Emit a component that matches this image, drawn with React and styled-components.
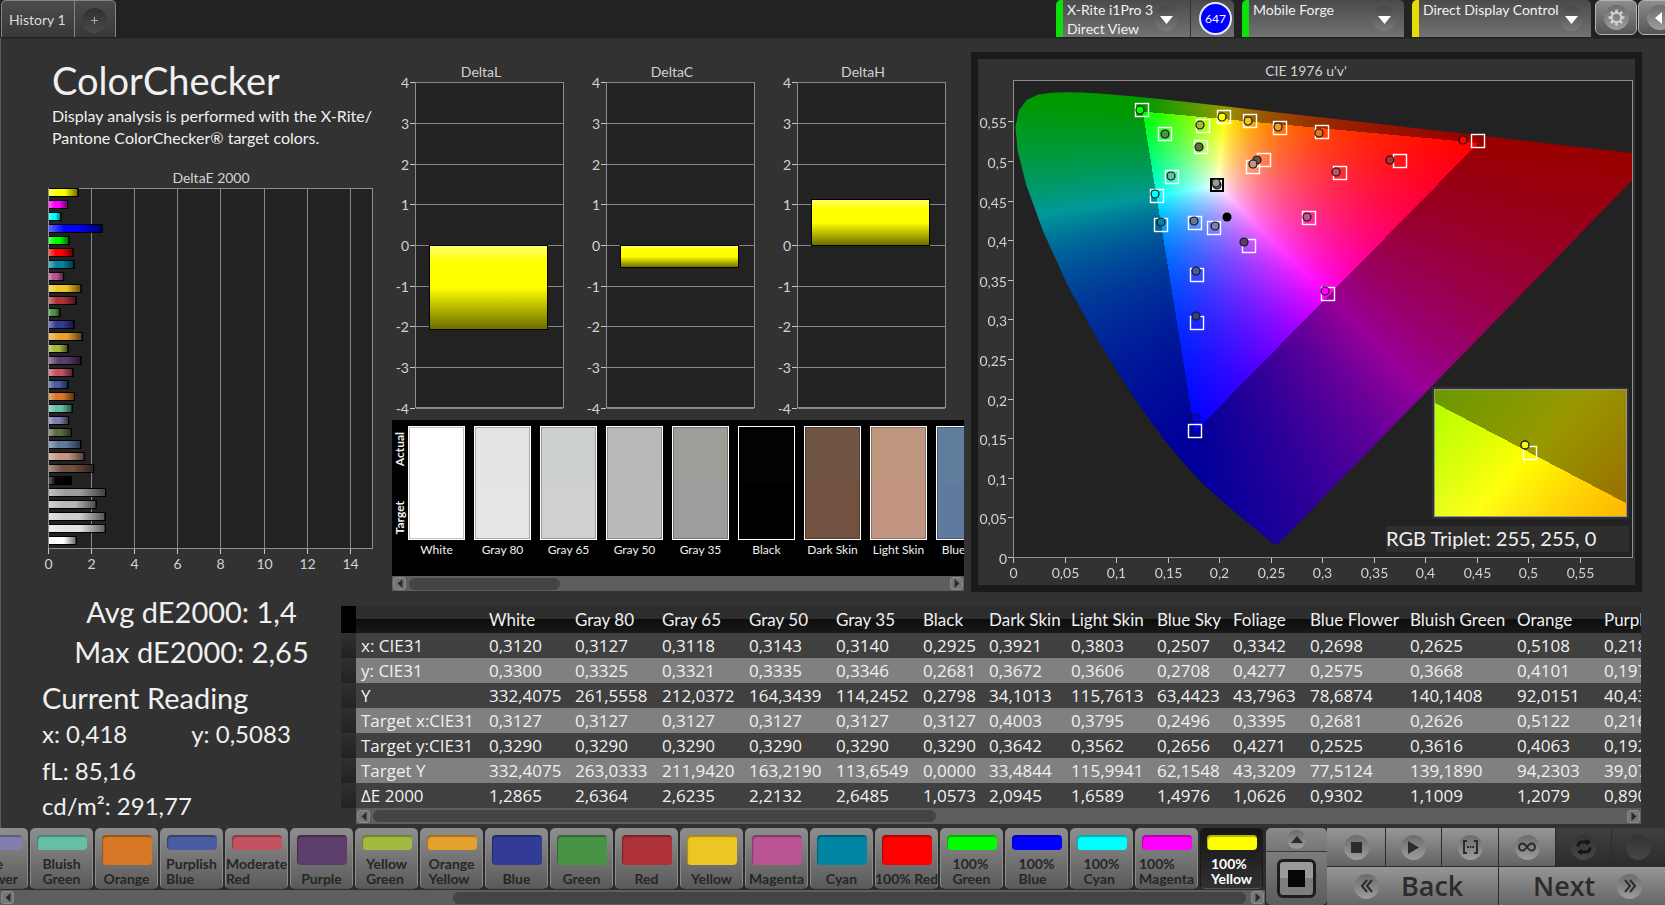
import React, { useEffect, useRef } from "react";
import styled, { createGlobalStyle, css } from "styled-components";

const UI = '"Lato", "Liberation Sans", sans-serif';
const GRID_FONT = '"Open Sans", "Noto Sans", sans-serif';

const GlobalStyle = createGlobalStyle`
  *, *::before, *::after { box-sizing: border-box; }
  body { margin: 0; background: #323232; color: #f0f0f0; font-family: ${UI}; }
  button, select { font-family: inherit; margin: 0; }
  button { padding: 0; border: 0; cursor: pointer; }
`;

/* ---------- data ---------- */

const COLORS = {
  white: "#ffffff", gray80: "#e4e4e4", gray65: "#cfcfcf", gray50: "#b8b8b8", gray35: "#9c9c9c",
  black: "#050505", darkSkin: "#73513f", lightSkin: "#c39583", blueSky: "#5e7b9d", foliage: "#5a6d42",
  blueFlower: "#827fb0", bluishGreen: "#66bea7", orange: "#d87725", purplishBlue: "#4a5ca2",
  moderateRed: "#c45361", purple: "#5d3d6c", yellowGreen: "#9fba3f", orangeYellow: "#e6a12c",
  blue: "#323b95", green: "#489345", red: "#ae3038", yellow: "#ecc622", magenta: "#b95392",
  cyan: "#0086a4", red100: "#ff0000", green100: "#00ff00", blue100: "#0000ff", cyan100: "#00ffff",
  magenta100: "#ff00ff", yellow100: "#ffff00",
};

const DELTA_E = [
  ["yellow100", 1.37], ["magenta100", 0.89], ["cyan100", 0.58], ["blue100", 2.48], ["green100", 0.95],
  ["red100", 1.14], ["cyan", 1.18], ["magenta", 0.7], ["yellow", 1.51], ["red", 1.28], ["green", 0.53],
  ["blue", 1.18], ["orangeYellow", 1.56], ["yellowGreen", 0.9], ["purple", 1.5], ["moderateRed", 1.13],
  ["purplishBlue", 0.9], ["orange", 1.2079], ["bluishGreen", 1.1009], ["blueFlower", 0.9302],
  ["foliage", 1.0626], ["blueSky", 1.4976], ["lightSkin", 1.6589], ["darkSkin", 2.0945],
  ["black", 1.0573], ["gray35", 2.6485], ["gray50", 2.2132], ["gray65", 2.6235], ["gray80", 2.6364],
  ["white", 1.2865],
];

const SWATCHES = [
  ["White", "#ffffff", "#ffffff"], ["Gray 80", "#e3e5e2", "#e5e5e5"], ["Gray 65", "#cdd1cd", "#d0d0d0"],
  ["Gray 50", "#b9b9b8", "#bababa"], ["Gray 35", "#9c9e98", "#9e9d9e"], ["Black", "#020205", "#000000"],
  ["Dark Skin", "#6f5443", "#725140"], ["Light Skin", "#bf977e", "#c29482"], ["Blue Sky", "#5f7d9c", "#5f7a9d"],
];

const COLUMNS = [
  ["White", 86, "0,3120", "0,3300", "332,4075", "0,3127", "0,3290", "332,4075", "1,2865"],
  ["Gray 80", 87, "0,3127", "0,3325", "261,5558", "0,3127", "0,3290", "263,0333", "2,6364"],
  ["Gray 65", 87, "0,3118", "0,3321", "212,0372", "0,3127", "0,3290", "211,9420", "2,6235"],
  ["Gray 50", 87, "0,3143", "0,3335", "164,3439", "0,3127", "0,3290", "163,2190", "2,2132"],
  ["Gray 35", 87, "0,3140", "0,3346", "114,2452", "0,3127", "0,3290", "113,6549", "2,6485"],
  ["Black", 66, "0,2925", "0,2681", "0,2798", "0,3127", "0,3290", "0,0000", "1,0573"],
  ["Dark Skin", 82, "0,3921", "0,3672", "34,1013", "0,4003", "0,3642", "33,4844", "2,0945"],
  ["Light Skin", 86, "0,3803", "0,3606", "115,7613", "0,3795", "0,3562", "115,9941", "1,6589"],
  ["Blue Sky", 76, "0,2507", "0,2708", "63,4423", "0,2496", "0,2656", "62,1548", "1,4976"],
  ["Foliage", 77, "0,3342", "0,4277", "43,7963", "0,3395", "0,4271", "43,3209", "1,0626"],
  ["Blue Flower", 100, "0,2698", "0,2575", "78,6874", "0,2681", "0,2525", "77,5124", "0,9302"],
  ["Bluish Green", 107, "0,2625", "0,3668", "140,1408", "0,2626", "0,3616", "139,1890", "1,1009"],
  ["Orange", 87, "0,5108", "0,4101", "92,0151", "0,5122", "0,4063", "94,2303", "1,2079"],
  ["Purplish Blue", 110, "0,2181", "0,1974", "40,4312", "0,2161", "0,1929", "39,0712", "0,8901"],
];
const ROW_NAMES = ["x: CIE31", "y: CIE31", "Y", "Target x:CIE31", "Target y:CIE31", "Target Y", "ΔE 2000"];

const PATCHES = [
  [["Blue", "Flower"], "blueFlower"], [["Bluish", "Green"], "bluishGreen"], [["Orange"], "orange"],
  [["Purplish", "Blue"], "purplishBlue"], [["Moderate", "Red"], "moderateRed"], [["Purple"], "purple"],
  [["Yellow", "Green"], "yellowGreen"], [["Orange", "Yellow"], "orangeYellow"], [["Blue"], "blue"],
  [["Green"], "green"], [["Red"], "red"], [["Yellow"], "yellow"], [["Magenta"], "magenta"],
  [["Cyan"], "cyan"], [["100% Red"], "red100"], [["100%", "Green"], "green100"],
  [["100%", "Blue"], "blue100"], [["100%", "Cyan"], "cyan100"], [["100%", "Magenta"], "magenta100"],
  [["100%", "Yellow"], "yellow100"],
];

/* target x, target y, measured x, measured y (plot units), fill */
const MARKERS = [
  [128, 29, 126, 29, "green100"], [210, 36, 208, 36, "yellow100"], [236, 40, 234, 40, "yellow"],
  [266, 47, 264, 46, "orangeYellow"], [308, 51, 305, 52, "orange"], [464, 60, 449, 59, "red100"],
  [189, 45, 186, 44, "yellowGreen"], [151, 53, 151, 53, "green"], [187, 66, 185, 66, "foliage"],
  [250, 79, 243, 79, "darkSkin"], [239, 86, 239, 83, "lightSkin"], [158, 96, 157, 95, "bluishGreen"],
  [143, 115, 141, 113, "cyan100"], [147, 144, 147, 141, "cyan"], [181, 142, 180, 140, "blueSky"],
  [200, 147, 201, 145, "blueFlower"], [235, 165, 230, 161, "purple"], [326, 92, 322, 91, "moderateRed"],
  [386, 80, 376, 79, "red"], [295, 137, 293, 136, "magenta"], [183, 194, 182, 190, "purplishBlue"],
  [314, 213, 311, 210, "magenta100"], [183, 242, 182, 235, "blue"], [181, 350, 182, 337, "blue100"],
];

const LOCUS = [
  [0.1741, 0.005], [0.1733, 0.0048], [0.1714, 0.0051], [0.1689, 0.0069], [0.1644, 0.0109], [0.1566, 0.0177],
  [0.144, 0.0297], [0.1355, 0.0399], [0.1241, 0.0578], [0.1096, 0.0868], [0.0913, 0.1327], [0.0687, 0.2007],
  [0.0454, 0.295], [0.0235, 0.4127], [0.0082, 0.5384], [0.0039, 0.6548], [0.0139, 0.7502], [0.0389, 0.812],
  [0.0743, 0.8338], [0.1142, 0.8262], [0.1547, 0.8059], [0.1929, 0.7816], [0.2296, 0.7543], [0.3016, 0.6923],
  [0.3731, 0.6245], [0.4441, 0.5547], [0.5125, 0.4866], [0.5752, 0.4242], [0.627, 0.3725], [0.6658, 0.334],
  [0.6915, 0.3083], [0.719, 0.2809], [0.7347, 0.2653],
];

/* ---------- chromaticity painting ---------- */

const xyToUv = ([x, y]) => {
  const d = -2 * x + 12 * y + 3;
  return [(4 * x) / d, (9 * y) / d];
};
const uvToXy = (u, v) => {
  const d = 6 * u - 16 * v + 12;
  return [(9 * u) / d, (4 * v) / d];
};

function xyToRgb(x, y) {
  const X = x / y;
  const Z = (1 - x - y) / y;
  const r = 3.2406 * X - 1.5372 - 0.4986 * Z;
  const g = -0.9689 * X + 1.8758 + 0.0415 * Z;
  const b = 0.0557 * X - 0.204 + 1.057 * Z;
  const k = (Math.min(r, g, b) < 0 ? 153 : 255) / Math.max(r, g, b);
  return [r, g, b].map((c) => Math.max(0, c) * k);
}

function Chromaticity({ width, height, toXy, outline }) {
  const ref = useRef(null);
  useEffect(() => {
    const ctx = ref.current.getContext("2d");
    const layer = document.createElement("canvas");
    layer.width = width;
    layer.height = height;
    const lctx = layer.getContext("2d");
    const image = lctx.createImageData(width, height);
    for (let py = 0; py < height; py++) {
      for (let px = 0; px < width; px++) {
        const [x, y] = toXy(px + 0.5, py + 0.5);
        const [r, g, b] = xyToRgb(x, Math.max(y, 0.0001));
        image.data.set([r, g, b, 255], (py * width + px) * 4);
      }
    }
    lctx.putImageData(image, 0, 0);
    ctx.clearRect(0, 0, width, height);
    ctx.save();
    if (outline) {
      ctx.beginPath();
      outline.forEach(([px, py]) => ctx.lineTo(px, py));
      ctx.closePath();
      ctx.clip();
    }
    ctx.drawImage(layer, 0, 0);
    ctx.restore();
  }, [width, height, toXy, outline]);
  return <Canvas ref={ref} width={width} height={height} />;
}

const Canvas = styled.canvas`
  display: block;
`;

const PLOT = { x: 36, y: 22, w: 618, h: 476, scaleX: 1030, scaleY: 792 };
const plotToXy = (px, py) => uvToXy(px / PLOT.scaleX, (PLOT.h - py) / PLOT.scaleY);
const LOCUS_OUTLINE = LOCUS.map(xyToUv).map(([u, v]) => [u * PLOT.scaleX, PLOT.h - v * PLOT.scaleY]);
const INSET = { x: 457, y: 331, w: 191, h: 126 };
const insetToXy = (px, py) => [
  0.4193 + (px / INSET.w - 0.5) * 0.05,
  0.5053 - (py / INSET.h - 0.5) * 0.05,
];

/* ---------- chart primitives ---------- */

const Chart = styled.svg`
  display: block;
  width: 100%;
  height: auto;
  font-family: ${UI};
  font-size: 14px;
  fill: #d2d2d2;
`;
const PlotArea = styled.rect`
  fill: ${(p) => p.$fill || "#222222"};
  stroke: #8e8e8e;
`;
const GridLine = styled.line`
  stroke: ${(p) => (p.$tick ? "#c8c8c8" : "#868686")};
`;
const BarRect = styled.rect`
  stroke: #000;
`;

function DeltaEChart() {
  const unit = 21.55;
  return (
    <Chart viewBox="0 0 392 424" role="img" aria-label="DeltaE 2000">
      <defs>
        <linearGradient id="barShade">
          <stop offset="0" stopColor="#fff" stopOpacity="0.4" />
          <stop offset="0.3" stopColor="#fff" stopOpacity="0" />
          <stop offset="0.55" stopColor="#000" stopOpacity="0" />
          <stop offset="1" stopColor="#000" stopOpacity="0.6" />
        </linearGradient>
      </defs>
      <text x="211" y="15" textAnchor="middle">DeltaE 2000</text>
      <PlotArea x="48.5" y="20.5" width="324" height="360" />
      {[0, 2, 4, 6, 8, 10, 12, 14].map((v) => {
        const x = Math.round(48 + v * unit) + 0.5;
        return (
          <g key={v}>
            <GridLine x1={x} x2={x} y1="21" y2="380" />
            <GridLine $tick x1={x} x2={x} y1="381" y2="386" />
            <text x={x} y="401" textAnchor="middle">{v}</text>
          </g>
        );
      })}
      {DELTA_E.map(([name, value], i) => {
        const box = { x: 48.5, y: 20.5 + i * 12, width: value * unit, height: 8 };
        return (
          <g key={name}>
            <BarRect {...box} fill={COLORS[name]} />
            <BarRect {...box} fill="url(#barShade)" />
          </g>
        );
      })}
      <line x1="48.5" x2="48.5" y1="20" y2="381" stroke="#8e8e8e" />
    </Chart>
  );
}

function DeltaChart({ title, value }) {
  const unit = 40.7;
  const zero = 185;
  const top = value > 0 ? zero - value * unit : zero;
  return (
    <Chart viewBox="0 0 191 360" role="img" aria-label={title}>
      <defs>
        <linearGradient id={`shade${title}`} x1="0" y1="0" x2="0" y2="1">
          <stop offset="0" stopColor="#ffff70" />
          <stop offset="0.2" stopColor="#ffff00" />
          <stop offset="0.5" stopColor="#ffff00" />
          <stop offset="1" stopColor="#6a6a00" />
        </linearGradient>
      </defs>
      <text x="89" y="17" textAnchor="middle">{title}</text>
      <PlotArea x="23.5" y="22.5" width="148" height="325" />
      {[4, 3, 2, 1, 0, -1, -2, -3, -4].map((v) => {
        const y = Math.round(zero - v * unit) + 0.5;
        return (
          <g key={v}>
            <GridLine x1="24" x2="171" y1={y} y2={y} />
            <GridLine $tick x1="18" x2="23" y1={y} y2={y} />
            <text x="17" y={y + 5} textAnchor="end">{v}</text>
          </g>
        );
      })}
      <BarRect x="37.5" y={Math.round(top) + 0.5} width="118" height={Math.round(Math.abs(value) * unit)} fill={`url(#shade${title})`} />
    </Chart>
  );
}

const axisLabel = (i) => String(Math.round(i * 5) / 100).replace(".", ",");

function CieChart() {
  const ticks = Array.from({ length: 12 }, (_, i) => i);
  const base = PLOT.y + PLOT.h;
  return (
    <Chart viewBox="0 0 657 526" role="img" aria-label="CIE 1976 u'v' chromaticity diagram">
      <text x="328" y="17" textAnchor="middle">CIE 1976 u'v'</text>
      <PlotArea x="35.5" y="21.5" width="619" height="477" />
      <foreignObject x={PLOT.x} y={PLOT.y} width={PLOT.w} height={PLOT.h}>
        <Chromaticity width={PLOT.w} height={PLOT.h} toXy={plotToXy} outline={LOCUS_OUTLINE} />
      </foreignObject>
      {ticks.map((i) => {
        const x = Math.round(PLOT.x + i * 51.5) - 0.5;
        const y = Math.round(base - i * 39.6) + 0.5;
        return (
          <g key={i}>
            <GridLine $tick x1={x} x2={x} y1={base + 1} y2={base + 6} />
            <text x={x} y={base + 21} textAnchor="middle">{axisLabel(i)}</text>
            <GridLine $tick x1="30" x2="35" y1={y} y2={y} />
            <text x="29" y={y + 6} textAnchor="end">{axisLabel(i)}</text>
          </g>
        );
      })}
      <g transform={`translate(${PLOT.x} ${PLOT.y})`}>
        {MARKERS.map(([tx, ty]) => (
          <rect key={`${tx}-${ty}`} x={tx - 6.5} y={ty - 6.5} width="13" height="13" fill="none" stroke="#fff" strokeWidth="1.4" />
        ))}
        <rect x="197" y="98" width="12" height="12" fill="none" stroke="#000" strokeWidth="2" />
        <rect x="199" y="100" width="8" height="8" fill="none" stroke="#fff" strokeWidth="1.5" />
        <circle cx="203" cy="104" r="4" fill="#777" stroke="#111" strokeWidth="1.2" />
        <circle cx="202" cy="102" r="4" fill="#9a9a9a" stroke="#111" strokeWidth="1.2" />
        {MARKERS.map(([, , mx, my, name]) => (
          <circle key={name} cx={mx} cy={my} r="4" fill={COLORS[name]} stroke="#141414" strokeWidth="1.2" />
        ))}
        <circle cx="213" cy="136" r="4.5" fill="#000" />
      </g>
      <rect x={INSET.x - 3} y={INSET.y - 3} width={INSET.w + 6} height={INSET.h + 6} fill="#303030" />
      <foreignObject x={INSET.x} y={INSET.y} width={INSET.w} height={INSET.h}>
        <Chromaticity width={INSET.w} height={INSET.h} toXy={insetToXy} />
      </foreignObject>
      <rect x={INSET.x - 0.5} y={INSET.y - 0.5} width={INSET.w + 1} height={INSET.h + 1} fill="none" stroke="#969696" />
      <rect x="545.5" y="387.5" width="13" height="13" fill="none" stroke="#fff" strokeWidth="1.4" />
      <circle cx="547" cy="386" r="4" fill="#ffff00" stroke="#222" strokeWidth="1.4" />
      <rect x="408" y="467" width="243" height="26" fill="#2e2e2e" />
      <text x="408" y="487" fontSize="20" fill="#f0f0f0">RGB Triplet: 255, 255, 0</text>
    </Chart>
  );
}

/* ---------- scroll bar ---------- */

const Track = styled.div`
  display: flex;
  align-items: center;
  gap: 3px;
  height: ${(p) => p.$height}px;
  padding: 0 1px;
  background: #5e5e5e;
`;
const ArrowButton = styled.button`
  flex: none;
  display: grid;
  place-items: center;
  width: 13px;
  height: 13px;
  border: 1px solid #8b8b8b;
  border-radius: 3px;
  background: #777777;
`;
const Rail = styled.div`
  flex: 1;
  display: flex;
  height: 12px;
`;
const Thumb = styled.div`
  border-radius: 6px;
  background: #444444;
`;

function ScrollBar({ start, size, height = 15, label }) {
  return (
    <Track $height={height}>
      <ArrowButton aria-label={`${label} left`}>
        <svg width="6" height="9" viewBox="0 0 6 9"><path d="M5.5 0v9L0.5 4.5z" fill="#2b2b2b" /></svg>
      </ArrowButton>
      <Rail>
        <Thumb style={{ marginLeft: `${start}%`, width: `${size}%` }} />
      </Rail>
      <ArrowButton aria-label={`${label} right`}>
        <svg width="6" height="9" viewBox="0 0 6 9"><path d="M0.5 0v9l5-4.5z" fill="#2b2b2b" /></svg>
      </ArrowButton>
    </Track>
  );
}

/* ---------- top bar ---------- */

const Page = styled.div`
  display: flex;
  flex-direction: column;
  min-height: 100vh;
  overflow: hidden;
`;
const TopBar = styled.header`
  display: flex;
  justify-content: space-between;
  height: 38px;
  background: #222222;
`;
const Tabs = styled.nav`
  display: flex;
  height: 37px;
  margin-left: 1px;
  border: 1px solid #858585;
  border-bottom: 0;
  border-radius: 5px 5px 0 0;
  background: linear-gradient(#4c4c4c, #383838);
`;
const Tab = styled.button`
  padding: 1px 8px 0 7px;
  background: none;
  color: #dcdcdc;
  font-size: 14px;
`;
const AddTab = styled.button`
  display: grid;
  place-items: center;
  width: 41px;
  padding-top: 3px;
  border-left: 1px solid #858585;
  background: none;
`;
const AddDisc = styled.span`
  display: grid;
  place-items: center;
  width: 25px;
  height: 25px;
  border-radius: 50%;
  background: linear-gradient(#2f2f2f, #4a4a4a);
`;
const Devices = styled.div`
  display: flex;
  gap: 8px;
`;
const Device = styled.div`
  display: flex;
  width: ${(p) => p.$width}px;
  height: 37px;
  border-left: 7px solid ${(p) => p.$accent};
  border-radius: 5px 5px 0 0;
  background: linear-gradient(#4a4a4a, #727272);
`;
const DeviceBody = styled.div`
  position: relative;
  flex: 1;
  min-width: 0;
`;
const DeviceSelect = styled.select`
  appearance: none;
  display: block;
  width: 100%;
  height: 19px;
  padding: 0 0 0 4px;
  border: 0;
  background: transparent;
  color: #f2f2f2;
  font-size: 14px;
`;
const DeviceMode = styled.span`
  display: block;
  padding-left: 4px;
  color: #f2f2f2;
  font-size: 14px;
  line-height: 19px;
`;
const Caret = styled.span`
  position: absolute;
  top: 6px;
  right: 8px;
  display: grid;
  place-items: center;
  width: 24px;
  height: 25px;
  padding-top: 3px;
  border-radius: 50%;
  background: linear-gradient(#484848, #7a7a7a);
  pointer-events: none;
`;
const Meter = styled.div`
  display: grid;
  place-items: center;
  width: 44px;
  margin-left: 4px;
  border-left: 1px solid #333;
  padding-left: 6px;
`;
const MeterValue = styled.span`
  display: grid;
  place-items: center;
  width: 33px;
  height: 33px;
  border: 2px solid #e8e8ff;
  border-radius: 50%;
  background: #0000ff;
  color: #fff;
  font-size: 12px;
`;
const SystemButtons = styled.div`
  display: flex;
  width: 70px;
  margin-left: -4px;
  overflow: hidden;
`;
const SystemButton = styled.button`
  flex: none;
  display: grid;
  place-items: center;
  width: 42px;
  height: 35px;
  margin-right: 1px;
  border: 1px solid #b4b4b4;
  border-radius: 6px;
  background: linear-gradient(#8d8d8d, #555555);
`;
const Disc = styled.span`
  display: grid;
  place-items: center;
  width: ${(p) => p.$size || 25}px;
  height: ${(p) => p.$size || 25}px;
  border-radius: 50%;
  background: ${(p) => (p.$dark ? "linear-gradient(#333, #474747)" : "linear-gradient(#6b6b6b, #9d9d9d)")};
`;

function DownCaret() {
  return (
    <Caret>
      <svg width="13" height="8" viewBox="0 0 13 8"><path d="M0 0h13L6.5 8z" fill="#fff" /></svg>
    </Caret>
  );
}

function Header() {
  return (
    <TopBar>
      <Tabs>
        <Tab>History 1</Tab>
        <AddTab aria-label="Add tab">
          <AddDisc>
            <svg width="9" height="9" viewBox="0 0 9 9"><path d="M4.5 1v7M1 4.5h7" stroke="#aaa" /></svg>
          </AddDisc>
        </AddTab>
      </Tabs>
      <Devices>
        <Device $width={178} $accent="#0be00b">
          <DeviceBody>
            <DeviceSelect aria-label="Meter"><option>X-Rite i1Pro 3</option></DeviceSelect>
            <DeviceMode>Direct View</DeviceMode>
            <DownCaret />
          </DeviceBody>
          <Meter><MeterValue>647</MeterValue></Meter>
        </Device>
        <Device $width={162} $accent="#0be00b">
          <DeviceBody>
            <DeviceSelect aria-label="Source"><option>Mobile Forge</option></DeviceSelect>
            <DownCaret />
          </DeviceBody>
        </Device>
        <Device $width={179} $accent="#e6dc0a">
          <DeviceBody>
            <DeviceSelect aria-label="Display"><option>Direct Display Control</option></DeviceSelect>
            <DownCaret />
          </DeviceBody>
        </Device>
        <SystemButtons>
          <SystemButton aria-label="Settings">
            <Disc>
              <svg width="17" height="17" viewBox="-9 -9 18 18">
                {Array.from({ length: 8 }, (_, i) => (
                  <rect key={i} x="-1.4" y="-8.4" width="2.8" height="4" fill="#d2d2d2" transform={`rotate(${i * 45})`} />
                ))}
                <circle r="5" fill="none" stroke="#d2d2d2" strokeWidth="2" />
              </svg>
            </Disc>
          </SystemButton>
          <SystemButton aria-label="Collapse panel">
            <Disc>
              <svg width="8" height="12" viewBox="0 0 8 12"><path d="M7 0v12L0 6z" fill="#fff" /></svg>
            </Disc>
          </SystemButton>
        </SystemButtons>
      </Devices>
    </TopBar>
  );
}

/* ---------- main area ---------- */

const Workspace = styled.main`
  flex: 1;
  box-shadow: inset 1px 0 0 #5c5c5c, inset 0 1px 0 #2a2a2a;
`;
const Panels = styled.section`
  display: grid;
  grid-template-columns: minmax(0, 392fr) minmax(0, 573fr) minmax(0, 700fr);
`;
const Intro = styled.div`
  height: 130px;
  padding: 20px 0 0 52px;
  white-space: nowrap;
`;
const Title = styled.h1`
  margin: 0;
  font-size: 38px;
  font-weight: 400;
  line-height: 44px;
`;
const Description = styled.p`
  margin: 3px 0 0;
  font-size: 16px;
  line-height: 22px;
`;
const Middle = styled.div`
  padding-top: 22px;
`;
const DeltaCharts = styled.div`
  display: grid;
  grid-template-columns: repeat(3, minmax(0, 1fr));
`;
const SwatchPanel = styled.div`
  margin-right: 1px;
  background: #000;
`;
const SwatchStrip = styled.div`
  display: flex;
  height: 156px;
  padding-top: 6px;
  overflow: hidden;
`;
const SideLabels = styled.div`
  flex: none;
  display: flex;
  flex-direction: column-reverse;
  justify-content: space-between;
  width: 16px;
  height: 114px;
  padding: 6px 0;
  font-size: 12px;
  font-weight: 700;
`;
const SideLabel = styled.span`
  writing-mode: vertical-rl;
  transform: rotate(180deg);
  line-height: 16px;
`;
const Swatch = styled.figure`
  flex: none;
  width: 57px;
  margin: 0 9px 0 0;
`;
const SwatchColor = styled.div`
  height: 114px;
  border: 1px solid #fff;
  outline: 1px solid rgba(0, 0, 0, 0.25);
  outline-offset: -2px;
  background: linear-gradient(${(p) => p.$actual} 50%, ${(p) => p.$target} 50%);
`;
const SwatchName = styled.figcaption`
  font-size: 12px;
  line-height: 20px;
  text-align: center;
  white-space: nowrap;
`;
const CiePanel = styled.div`
  margin: 14px 23px 0 6px;
  border: 7px solid #1a1a1a;
`;

const Results = styled.section`
  display: flex;
  padding-right: 24px;
`;
const Stats = styled.div`
  flex: none;
  width: 341px;
  padding-left: 42px;
  white-space: nowrap;
`;
const Summary = styled.p`
  width: 299px;
  margin: 0;
  font-size: 29px;
  line-height: 40px;
  text-align: center;
`;
const ReadingTitle = styled.h2`
  margin: 4px 0 0;
  font-size: 29px;
  font-weight: 400;
  line-height: 44px;
`;
const Reading = styled.p`
  display: flex;
  gap: 64px;
  margin: 0;
  font-size: 24px;
  line-height: ${(p) => p.$line}px;
`;
const TableArea = styled.div`
  flex: 1;
  min-width: 0;
  padding: 14px 0 4px;
`;
const TableClip = styled.div`
  overflow: hidden;
`;
const Table = styled.table`
  table-layout: fixed;
  width: 1368px;
  border-collapse: collapse;
  font-size: 17px;
  line-height: 25px;
  white-space: nowrap;
  text-align: left;
`;
const HeadRow = styled.tr`
  height: 27px;
  background: linear-gradient(#2c2c2c 0, #2e2e2e 46%, #0d0d0d 50%, #191919 100%);
`;
const BodyRow = styled.tr`
  height: 25px;
  background: ${(p) => (p.$light ? "#808080" : "#404040")};
  font-family: ${GRID_FONT};
`;
const cell = css`
  padding: 0 0 0 5px;
  font-weight: 400;
`;
const HeadCell = styled.th`${cell}`;
const Cell = styled.td`${cell}`;
const Selector = styled.td`
  padding: 0;
  background: ${(p) => (p.$head ? "#000" : "linear-gradient(#303030, #222222)")};
`;
const TableScroll = styled.div`
  margin-left: 15px;
`;

function DataTable() {
  return (
    <TableArea>
      <TableClip>
        <Table>
          <colgroup>
            <col style={{ width: 15 }} />
            <col style={{ width: 128 }} />
            {COLUMNS.map(([name, width]) => <col key={name} style={{ width }} />)}
          </colgroup>
          <thead>
            <HeadRow>
              <Selector $head />
              <Cell />
              {COLUMNS.map(([name]) => <HeadCell key={name} scope="col">{name}</HeadCell>)}
            </HeadRow>
          </thead>
          <tbody>
            {ROW_NAMES.map((rowName, r) => (
              <BodyRow key={rowName} $light={r % 2 === 1}>
                <Selector />
                <HeadCell scope="row">{rowName}</HeadCell>
                {COLUMNS.map((column) => <Cell key={column[0]}>{column[r + 2]}</Cell>)}
              </BodyRow>
            ))}
          </tbody>
        </Table>
      </TableClip>
      <TableScroll><ScrollBar start={0} size={45} height={16} label="Scroll table" /></TableScroll>
    </TableArea>
  );
}

/* ---------- footer ---------- */

const Footer = styled.footer`
  display: flex;
  height: 77px;
  background: #2c2c2c;
`;
const PatchArea = styled.div`
  flex: 1;
  min-width: 0;
  margin-right: 1px;
`;
const PatchRow = styled.div`
  display: flex;
  justify-content: flex-end;
  gap: 2px;
  height: 62px;
  padding-right: 2px;
  overflow: hidden;
`;
const PatchButton = styled.button`
  flex: none;
  display: flex;
  flex-direction: column;
  align-items: center;
  justify-content: space-between;
  width: 63px;
  height: 61px;
  padding: 6px 0 2px;
  border: 1px solid ${(p) => (p.$active ? "#1a1a1a" : "#8a8a8a")};
  border-bottom-color: #555;
  border-radius: 5px;
  background: ${(p) => (p.$active ? "linear-gradient(#161616, #303030)" : "linear-gradient(#8e8e8e, #5a5a5a)")};
  color: ${(p) => (p.$active ? "#fff" : "#262626")};
  font-size: 14px;
  font-weight: 700;
  line-height: 15px;
  text-align: left;
  white-space: nowrap;
`;
const PatchColor = styled.span`
  width: 50px;
  height: ${(p) => (p.$tall ? 30 : 15)}px;
  border-radius: 4px;
  background: ${(p) => p.$color};
  box-shadow: inset 1px 2px 1px rgba(0, 0, 0, 0.3);
`;
const PatchLine = styled.span`
  display: block;
`;
const WindowControl = styled.div`
  flex: none;
  display: flex;
  flex-direction: column;
  width: 61px;
  border-radius: 5px;
  overflow: hidden;
`;
const ExpandButton = styled.button`
  display: grid;
  place-items: center;
  height: 24px;
  border-bottom: 1px solid #383838;
  background: linear-gradient(#8a8a8a, #767676);
`;
const PatternButton = styled.button`
  flex: 1;
  display: grid;
  place-items: center;
  background: linear-gradient(#7c7c7c, #5c5c5c);
`;
const PatternFrame = styled.span`
  display: grid;
  place-items: center;
  width: 39px;
  height: 39px;
  border: 3px solid #1c1c1c;
  border-radius: 6px;
  background: linear-gradient(#9a9a9a 50%, #7d7d7d 50%);
`;
const PatternSquare = styled.span`
  width: 17px;
  height: 17px;
  background: #060606;
`;
const Transport = styled.div`
  flex: none;
  display: grid;
  grid-template-columns: 58px 55px 56px 56px 55px 53px;
  grid-template-rows: 38px 38px;
  gap: 1px;
  width: 338px;
`;
const ControlButton = styled.button`
  display: grid;
  place-items: center;
  background: ${(p) => (p.disabled ? "linear-gradient(#404040, #2b2b2b)" : "linear-gradient(#979797, #636363)")};
`;
const StepButton = styled.button`
  grid-column: span 3;
  display: flex;
  align-items: center;
  gap: 22px;
  padding-left: ${(p) => (p.$next ? 34 : 27)}px;
  background: linear-gradient(#969696, #666666);
  color: #2c2c2c;
  font-family: ${GRID_FONT};
  font-size: 27px;
  font-weight: 600;
  line-height: 36px;
`;

const ink = { fill: "none", stroke: "#2c2c2c", strokeWidth: 2 };

function FooterBar() {
  return (
    <Footer>
      <PatchArea>
        <PatchRow>
          {PATCHES.map(([lines, color]) => (
            <PatchButton key={color} $active={color === "yellow100"}>
              <PatchColor $color={COLORS[color]} $tall={lines.length === 1} />
              <span>{lines.map((line) => <PatchLine key={line}>{line}</PatchLine>)}</span>
            </PatchButton>
          ))}
        </PatchRow>
        <ScrollBar start={35.4} size={64.4} label="Scroll patches" />
      </PatchArea>
      <WindowControl>
        <ExpandButton aria-label="Expand">
          <Disc $size={19}>
            <svg width="12" height="7" viewBox="0 0 12 7"><path d="M0 7h12L6 0z" fill="#2c2c2c" /></svg>
          </Disc>
        </ExpandButton>
        <PatternButton aria-label="Test pattern"><PatternFrame><PatternSquare /></PatternFrame></PatternButton>
      </WindowControl>
      <Transport>
        <ControlButton aria-label="Stop">
          <Disc><svg width="11" height="11"><rect width="11" height="11" fill="#2c2c2c" /></svg></Disc>
        </ControlButton>
        <ControlButton aria-label="Play">
          <Disc><svg width="11" height="13" viewBox="0 0 11 13"><path d="M0 0v13l11-6.5z" fill="#2c2c2c" /></svg></Disc>
        </ControlButton>
        <ControlButton aria-label="Read series">
          <Disc>
            <svg width="17" height="14" viewBox="0 0 17 14">
              <path d="M5 1H2v12h3M12 1h3v12h-3" {...ink} />
              <path d="M5 7h2M7.8 7h1.6M10.2 7h2" {...ink} />
            </svg>
          </Disc>
        </ControlButton>
        <ControlButton aria-label="Read continuously">
          <Disc>
            <svg width="18" height="10" viewBox="0 0 18 10">
              <path d="M9 5C7 2.4 6 1.4 4.6 1.4a3.6 3.6 0 0 0 0 7.2C6 8.6 7 7.6 9 5s3-3.6 4.4-3.6a3.6 3.6 0 0 1 0 7.2C12 8.6 11 7.6 9 5z" {...ink} />
            </svg>
          </Disc>
        </ControlButton>
        <ControlButton aria-label="Refresh" disabled>
          <Disc $dark>
            <svg width="16" height="16" viewBox="0 0 16 16">
              <path d="M2 7.5C2 4.5 4 3 6.500 3H11M14 8.500C14 11.500 12 13 9.500 13H5" fill="none" stroke="#161616" strokeWidth="3" />
              <path d="M10 0v6.500L15 3zM6 9.500V16L1 13z" fill="#161616" />
            </svg>
          </Disc>
        </ControlButton>
        <ControlButton aria-label="Record" disabled><Disc $dark /></ControlButton>
        <StepButton>
          <Disc>
            <svg width="14" height="14" viewBox="0 0 14 14"><path d="M7 1L2 7l5 6M12 1L7 7l5 6" {...ink} /></svg>
          </Disc>
          Back
        </StepButton>
        <StepButton $next>
          Next
          <Disc>
            <svg width="14" height="14" viewBox="0 0 14 14"><path d="M2 1l5 6-5 6M7 1l5 6-5 6" {...ink} /></svg>
          </Disc>
        </StepButton>
      </Transport>
    </Footer>
  );
}

export default function App() {
  return (
    <Page>
      <GlobalStyle />
      <Header />
      <Workspace>
        <Panels>
          <div>
            <Intro>
              <Title>ColorChecker</Title>
              <Description>
                Display analysis is performed with the X-Rite/
                <br />
                Pantone ColorChecker® target colors.
              </Description>
            </Intro>
            <DeltaEChart />
          </div>
          <Middle>
            <DeltaCharts>
              <DeltaChart title="DeltaL" value={-2.06} />
              <DeltaChart title="DeltaC" value={-0.53} />
              <DeltaChart title="DeltaH" value={1.13} />
            </DeltaCharts>
            <SwatchPanel>
              <SwatchStrip>
                <SideLabels>
                  <SideLabel>Target</SideLabel>
                  <SideLabel>Actual</SideLabel>
                </SideLabels>
                {SWATCHES.map(([name, actual, target]) => (
                  <Swatch key={name}>
                    <SwatchColor $actual={actual} $target={target} />
                    <SwatchName>{name}</SwatchName>
                  </Swatch>
                ))}
              </SwatchStrip>
              <ScrollBar start={0} size={28} label="Scroll swatches" />
            </SwatchPanel>
          </Middle>
          <CiePanel><CieChart /></CiePanel>
        </Panels>
        <Results>
          <Stats>
            <Summary>Avg dE2000: 1,4</Summary>
            <Summary>Max dE2000: 2,65</Summary>
            <ReadingTitle>Current Reading</ReadingTitle>
            <Reading $line={28}><span>x: 0,418</span><span>y: 0,5083</span></Reading>
            <Reading $line={46}>fL: 85,16</Reading>
            <Reading $line={24}>cd/m²: 291,77</Reading>
          </Stats>
          <DataTable />
        </Results>
      </Workspace>
      <FooterBar />
    </Page>
  );
}
